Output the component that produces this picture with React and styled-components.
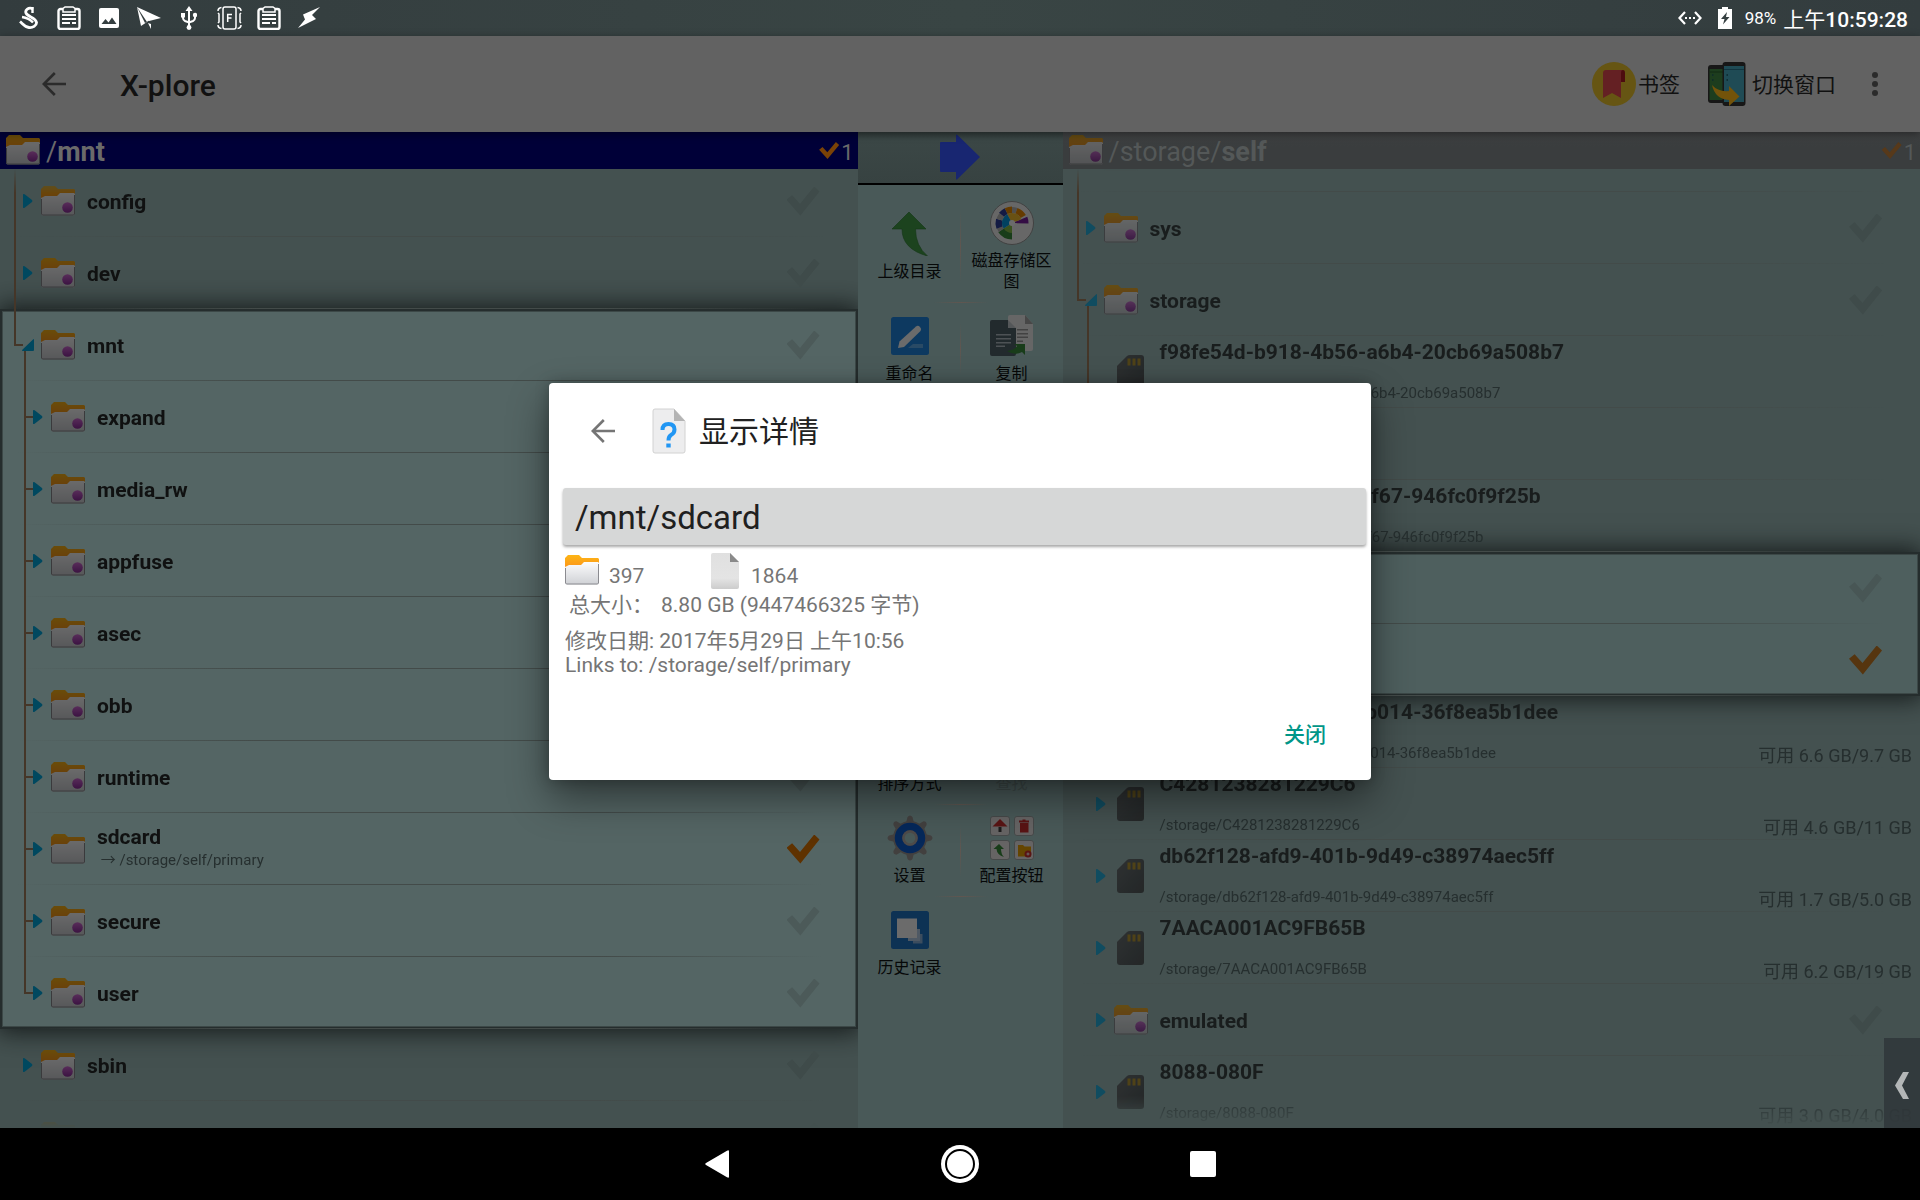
import React from "react";
import styled, { createGlobalStyle, css } from "styled-components";

const GlobalStyle = createGlobalStyle`
  *, *::before, *::after { box-sizing: border-box; }
  body {
    margin: 0;
    background: #000;
    font-family: Roboto, "Noto Sans CJK SC", sans-serif;
  }
  button {
    font: inherit;
    color: inherit;
    border: 0;
    padding: 0;
    background: none;
    cursor: pointer;
  }
  svg { display: block; flex: none; }
`;

const Screen = styled.div`
  position: relative;
  display: flex;
  flex-direction: column;
  height: 100vh;
  overflow: hidden;
`;

/* ---------- status bar ---------- */

const StatusBar = styled.header`
  flex: none;
  display: flex;
  align-items: center;
  justify-content: space-between;
  height: 36px;
  padding: 0 12px 0 17px;
  background: linear-gradient(90deg, #333c3e, #394544 50%, #333c3e);
  color: #fff;
`;

const StatusGroup = styled.div`
  display: flex;
  align-items: center;
  gap: 16px;
`;

const StatusIcon = styled.span`
  display: flex;
  justify-content: center;
  width: 24px;
`;

const Battery = styled.span`
  font-size: 17px;
  margin-left: -3px;
`;

const Clock = styled.time`
  font-size: 21px;
  font-weight: 500;
  margin-left: -9px;
`;

const ClockPeriod = styled.span`
  font-weight: 400;
`;

/* ---------- toolbar ---------- */

const Toolbar = styled.div`
  flex: none;
  position: relative;
  z-index: 1;
  display: flex;
  align-items: center;
  height: 96px;
  padding: 0 36px 0 42px;
  background: #626262;
  color: #111;
  box-shadow: 0 2px 8px rgba(0, 0, 0, 0.4);
`;

const AppTitle = styled.h1`
  flex: 1;
  margin: 0 0 0 54px;
  padding-top: 2px;
  font-size: 30px;
  font-weight: 500;
`;

const ToolbarButton = styled.button`
  display: flex;
  align-items: center;
  gap: ${(p) => p.$gap}px;
  margin-right: ${(p) => p.$after}px;
  font-size: 21px;
`;

const ToolbarLabel = styled.span`
  padding-bottom: 2px;
`;

/* ---------- panes ---------- */

const Workspace = styled.main`
  flex: 1;
  min-height: 0;
  display: grid;
  grid-template-columns: 1fr 205px 1fr;
`;

const Pane = styled.section`
  position: relative;
  display: flex;
  flex-direction: column;
  min-width: 0;
  min-height: 0;
  background: #445150;
  overflow: hidden;
`;

const PaneHeader = styled.div`
  flex: none;
  display: flex;
  align-items: center;
  height: 37px;
  padding: 0 4px 0 6px;
  background: ${(p) => (p.$active ? "#000038" : "linear-gradient(#3f4142, #3a3d3e 40%)")};
  color: ${(p) => (p.$active ? "#6a6a6a" : "#545858")};
  font-size: 27px;
`;

const PanePath = styled.h2`
  flex: 1;
  margin: 0 0 0 6px;
  padding-top: 4px;
  font-size: 27px;
  line-height: 33px;
  font-weight: 400;
`;

const Count = styled.span`
  margin-left: 2px;
  padding-top: 3px;
  font-size: 22px;
`;

const ListViewport = styled.div`
  flex: 1;
  min-height: 0;
  overflow: hidden;
  mask-image: linear-gradient(transparent, #000 24px, #000 calc(100% - 32px), transparent);
`;

const TreeList = styled.ul`
  list-style: none;
  margin: ${(p) => -p.$scrolled}px 0 0;
  padding: 0;
`;

const Group = styled.div`
  --unchecked: ${(p) => (p.$active ? "#4c5a59" : "#485655")};
  background: ${(p) => (p.$active ? "#546564" : "#4e5f5e")};
  box-shadow: inset 0 0 0 2px #252d2d, inset 0 0 0 3px #3c4847, 0 0 24px 3px rgba(16, 20, 20, 0.9);
`;

const lineColor = "#453628";

const Row = styled.li`
  position: relative;
  display: flex;
  align-items: center;
  height: 72px;
  padding: 0 8px 0 ${(p) => 22 + p.$level * 10}px;
  background: linear-gradient(90deg, transparent 2%, #434b49 30%, #434b49 70%, transparent 96%)
    bottom / 100% 1px no-repeat;
  color: ${(p) => (p.$active ? "#101111" : "#191d1d")};

  &::before {
    content: "";
    display: ${(p) => (p.$line ? "block" : "none")};
    position: absolute;
    left: ${(p) => (p.$level ? 24 : 14)}px;
    top: 0;
    height: ${(p) => (p.$line === "end" ? 37 : 72)}px;
    width: ${(p) => (p.$line === "through" ? 2 : 9)}px;
    border-left: 2px solid ${lineColor};
    border-bottom: ${(p) => (p.$line === "end" ? `2px solid ${lineColor}` : 0)};
  }

  &::after {
    content: "";
    display: ${(p) => (p.$open || p.$branch ? "block" : "none")};
    position: absolute;
    left: ${(p) => (p.$open ? 24 : 26)}px;
    top: ${(p) => (p.$open ? 40 : 35)}px;
    width: ${(p) => (p.$open ? 2 : 7)}px;
    height: ${(p) => (p.$open ? 32 : 2)}px;
    background: ${lineColor};
  }
`;

const Expander = styled.button`
  position: relative;
  z-index: 1;
  width: 12px;
  margin-right: 7px;
`;

const dimmed = css`
  filter: brightness(0.42);
  opacity: ${(p) => (p.$faded ? 0.85 : 1)};
`;

const IconSlot = styled.span`
  ${dimmed}
  flex: none;
  display: flex;
  justify-content: center;
  width: 34px;
`;

const RowText = styled.div`
  flex: 1;
  min-width: 0;
  height: 72px;
  display: flex;
  flex-direction: column;
  justify-content: ${(p) => (p.$spread ? "space-between" : "center")};
  padding: ${(p) => (p.$spread ? "4px 0 4px 12px" : p.$twoLines ? "3px 0 5px 12px" : "5px 0 3px 12px")};
  white-space: nowrap;
`;

const Name = styled.span`
  font-size: 21px;
  line-height: 24px;
  font-weight: 700;
`;

const Detail = styled.span`
  font-size: 15px;
  line-height: 22px;
  color: #262f2f;
  white-space: pre;
`;

const Free = styled.span`
  align-self: flex-end;
  margin-bottom: 2px;
  font-size: 18px;
  line-height: 20px;
  color: #262f2f;
`;

const CheckMark = styled.input`
  appearance: none;
  flex: none;
  width: ${(p) => (p.$small ? 20 : 33)}px;
  height: ${(p) => (p.$small ? 17 : 29)}px;
  margin: ${(p) => (p.$small ? "0" : "0 30px 0 0")};
  background: var(--unchecked, #3f4b4a);
  clip-path: polygon(0 46%, 17% 30%, 41% 60%, 84% 0, 100% 17%, 42% 100%);

  &:checked { background: ${(p) => (p.$faded ? "#56350f" : "#5f3200")}; }
  &:checked:disabled { background: ${(p) => (p.$faded ? "#57391a" : "#7a4206")}; }
`;

/* ---------- centre column ---------- */

const Middle = styled.nav`
  min-height: 0;
  background: #495958;
  overflow: hidden;
`;

const SwitchPane = styled.button`
  display: flex;
  justify-content: center;
  align-items: center;
  width: 100%;
  height: 53px;
  padding: 0 0 2px;
  background: linear-gradient(#323c3b, #3b4746 8px, #374241);
  border-bottom: 2px solid #000;
`;

const ToolGrid = styled.div`
  display: grid;
  grid-template-columns: 1fr 1fr;
  padding: 5px 0 0 1px;
`;

const Tool = styled.button`
  position: relative;
  display: flex;
  flex-direction: column;
  align-items: center;
  justify-content: center;
  gap: 5px;
  min-height: ${(p) => (p.$tall ? 113 : 92)}px;
  padding: 11px 10px;
  font-size: 16px;
  line-height: 21px;
  color: ${(p) => (p.disabled ? "#3f4b4a" : "#060808")};

  &:nth-child(odd)::before {
    content: "";
    position: absolute;
    right: 0;
    top: 20px;
    bottom: 20px;
    width: 1px;
    background: linear-gradient(transparent, #605650, transparent);
  }
  &:nth-child(odd)::after {
    content: "";
    position: absolute;
    z-index: 1;
    right: -27px;
    bottom: 0;
    width: 54px;
    height: 1px;
    background: linear-gradient(90deg, transparent, #605650, transparent);
  }
  &:last-child::before, &:last-child::after { display: none; }
`;

const ToolIcon = styled.span`
  ${dimmed}
  display: flex;
  align-items: center;
  justify-content: center;
  width: 46px;
  height: 44px;
`;

const EdgeTab = styled.button`
  position: absolute;
  right: 0;
  bottom: 0;
  display: flex;
  align-items: center;
  justify-content: center;
  width: 36px;
  height: 90px;
  padding: 4px 0 0 0;
  background: rgba(46, 52, 56, 0.8);
`;

/* ---------- dialog ---------- */

const DialogLayer = styled.div`
  position: absolute;
  inset: 36px 0 72px;
  z-index: 2;
  display: flex;
  align-items: center;
  justify-content: center;
  padding-bottom: 2px;
`;

const Dialog = styled.div`
  display: flex;
  flex-direction: column;
  width: 822px;
  max-width: 90%;
  min-height: 397px;
  background: #fff;
  color: #757575;
  border-radius: 4px;
  box-shadow: 0 18px 40px rgba(0, 0, 0, 0.45), 0 0 14px rgba(0, 0, 0, 0.25);
`;

const DialogHeader = styled.div`
  display: flex;
  align-items: center;
  height: 96px;
  padding: 0 42px;
`;

const DialogTitle = styled.h2`
  margin: 0 0 0 13px;
  padding-bottom: 4px;
  font-size: 30px;
  font-weight: 400;
  color: #212121;
`;

const FileBadge = styled.span`
  margin-left: 37px;
`;

const PathButton = styled.button`
  margin: 9px 5px 0 14px;
  padding: 2px 12px 0;
  height: 57px;
  font-size: 33px;
  text-align: left;
  color: #1f2020;
  background: #d6d7d7;
  border-radius: 3px;
  box-shadow: 0 2px 3px rgba(0, 0, 0, 0.35);
`;

const Details = styled.div`
  flex: 1;
  padding: 8px 16px 0;
  font-size: 21px;
  line-height: 24px;
`;

const Counts = styled.div`
  display: flex;
  height: 40px;
  align-items: flex-start;
`;

const Tally = styled.span`
  display: flex;
  align-items: center;
  gap: ${(p) => p.$gap}px;
  width: 146px;
  height: 36px;
`;

const TallyValue = styled.span`
  padding-top: 11px;
`;

const SizeLine = styled.p`
  display: flex;
  gap: 8px;
  margin: 0 0 12px 4px;
`;

const SizeLabel = styled.span`
  width: 84px;
`;

const Line = styled.p`
  margin: 0;
`;

const DialogActions = styled.div`
  display: flex;
  justify-content: flex-end;
  padding: 0 45px 30px;
`;

const CloseButton = styled.button`
  font-size: 21px;
  line-height: 30px;
  font-weight: 500;
  color: #009688;
`;

/* ---------- navigation bar ---------- */

const NavBar = styled.footer`
  flex: none;
  display: flex;
  align-items: center;
  justify-content: center;
  gap: 203px;
  height: 72px;
  background: #000;
`;

const NavButton = styled.button`
  display: flex;
  align-items: center;
  justify-content: center;
  width: 40px;
  height: 40px;
`;

/* ---------- drawings ---------- */

const BackArrow = ({ color }) => (
  <svg width="24" height="24" viewBox="0 0 24 24" fill="none" stroke={color} strokeWidth="2.6">
    <path d="M24 12H2M12.800 1 1.800 12l11 11" />
  </svg>
);

const Folder = ({ dot }) => (
  <svg width="34" height="33" viewBox="0 0 34 33">
    <defs>
      <linearGradient id="tab" x1="0" y1="0" x2="0" y2="1">
        <stop offset="0" stopColor="#fdb515" />
        <stop offset="1" stopColor="#fb8a1c" />
      </linearGradient>
      <linearGradient id="front" x1="0" y1="0" x2="0" y2="1">
        <stop offset="0" stopColor="#fcfcfd" />
        <stop offset="1" stopColor="#cfd1d5" />
      </linearGradient>
      <linearGradient id="dot" x1="0" y1="0" x2="0" y2="1">
        <stop offset="0" stopColor="#d46ad6" />
        <stop offset="1" stopColor="#8c2d9c" />
      </linearGradient>
    </defs>
    <path d="M0 18V4l3-3h11l3 3h16l1 1v13z" fill="url(#tab)" />
    <path d="M1 12.500 4 11h12l3-3h14l1 1v20l-1 1.500H1L0 29V13z" fill="url(#front)" />
    <path d="M.5 14v15l1 1h31l1-1V10" fill="none" stroke="#8b8b90" strokeWidth="1" />
    {dot && <circle cx="26.500" cy="22.500" r="5.300" fill="url(#dot)" />}
  </svg>
);

const SdCard = () => (
  <svg width="27" height="34" viewBox="0 0 27 34">
    <defs>
      <linearGradient id="sd" x1="0" y1="0" x2="1" y2="1">
        <stop offset="0" stopColor="#666a6d" />
        <stop offset=".55" stopColor="#55585a" />
        <stop offset="1" stopColor="#4a4d4f" />
      </linearGradient>
    </defs>
    <path d="M0 11 10 1q1-1 3-1h11q3 0 3 3v28q0 3-3 3H3q-3 0-3-3z" fill="url(#sd)" />
    <path d="M10.500 3.500h3v7h-3zM15.500 3.500h3v7h-3zM20.500 3.500h3v7h-3z" fill="#c4981f" />
  </svg>
);

const ExpandArrow = ({ open, faded }) => (
  <svg width="12" height="16" viewBox="0 0 12 16" fill={faded ? "#104c60" : "#00485f"}>
    {open ? (
      <path d="M11 2.500q1-1 1 .5v10q0 1-1 1H.6q-1.200-.5 0-1.500z" />
    ) : (
      <path d="M1 1.500q.3-1 1.600-.3L10 7q.9 1 0 2l-7.400 5.800q-1.300.7-1.600-.3z" />
    )}
  </svg>
);

const StorageDisc = () => {
  const wedge = (a, b, r, fill, r0 = 0) => {
    const pt = (t, q) => {
      const rad = ((t - 90) * Math.PI) / 180;
      return `${22 + q * Math.cos(rad)} ${22 + q * Math.sin(rad)}`;
    };
    return (
      <path
        key={`${a}-${r}`}
        fill={fill}
        d={`M${pt(a, r0)}L${pt(a, r)}A${r} ${r} 0 0 1 ${pt(b, r)}L${pt(b, r0)}A${r0} ${r0} 0 0 0 ${pt(a, r0)}z`}
      />
    );
  };
  return (
    <svg width="44" height="44" viewBox="0 0 44 44">
      <circle cx="22" cy="22" r="21.500" fill="#f6f6f6" stroke="#9a9a9a" />
      {wedge(0, 20, 16, "#b9b9b9", 10)}
      {wedge(20, 60, 16, "#f08c00", 10)}
      {wedge(68, 92, 16.500, "#7b1fa2", 3)}
      {wedge(180, 236, 16.500, "#388e3c", 9)}
      {wedge(236, 250, 16, "#b9b9b9", 10)}
      {wedge(250, 285, 16.500, "#303f9f", 10)}
      {wedge(285, 308, 16, "#b9b9b9", 10)}
      {wedge(308, 334, 16.500, "#303f9f", 10)}
      {wedge(334, 360, 16.500, "#f08c00", 10)}
      {wedge(-28, 68, 10, "#fbc02d")}
      {wedge(180, 236, 10, "#8bc34a")}
      {wedge(236, 332, 10, "#039be5")}
      <circle cx="22" cy="22" r="3" fill="#fff" />
    </svg>
  );
};

const UpArrow = () => (
  <svg width="44" height="44" viewBox="0 0 44 44">
    <path d="M21 0 38 17H27.500q0 17 12 27Q14 37 14 17H4z" fill="#43a047" stroke="#2e7d32" strokeWidth=".6" />
  </svg>
);

const Rename = () => (
  <svg width="38" height="38" viewBox="0 0 38 38">
    <rect width="38" height="38" rx="2.500" fill="#1e88e5" />
    <path d="M17 31 22 27h10v4z" fill="#90caf9" opacity=".6" />
    <path d="m7 31 1.500-6.500L25 9.500q2-1.500 4 .5t.5 4L13 30z" fill="#fff" />
  </svg>
);

const Copy = () => (
  <svg width="44" height="42" viewBox="0 0 44 42">
    <path d="M18 2q0-2 2-2h15l8 9v25q0 2-2 2H18z" fill="#f2f2f2" />
    <path d="M35 0v9h8z" fill="#a8a8a8" />
    <path d="M27 14h11v1.500H27zm0 4h11v1.500H27zm0 3.500h11V23H27zm0 4h6V27h-6z" fill="#9e9e9e" />
    <path d="M0 7q0-2 2-2h16v8h8v26q0 2-2 2H2q-2 0-2-2z" fill="#52636c" />
    <path d="m18 5 8 8h-8z" fill="#c9d0d4" />
    <path d="M6 19h15v1.500H6zm0 4h15v1.500H6zm0 4h15v1.500H6zm0 3.500h9V32H6z" fill="#b8c4ca" />
    <path d="M17 36q8-1 10-5l-3-2h11v11l-3-3q-7 4-15-1z" fill="#388e3c" />
  </svg>
);

const Gear = () => (
  <svg width="46" height="46" viewBox="0 0 46 46">
    <g fill="#9e9896">
      {[0, 45, 90, 135].map((a) => (
        <path key={a} transform={`rotate(${a} 23 23)`} d="M20.500 2q2.500-3 5 0l2 8v26l-2 8q-2.500 3-5 0l-2-8V10z" />
      ))}
      <circle cx="23" cy="23" r="17" />
    </g>
    <circle cx="23" cy="23" r="11.500" fill="none" stroke="#0d5fd6" strokeWidth="7.500" />
    <circle cx="23" cy="23" r="6.500" fill="#aed4d2" stroke="#b9b2b0" strokeWidth="2.500" />
  </svg>
);

const ButtonSet = () => (
  <svg width="44" height="44" viewBox="0 0 44 44">
    <g fill="#f3eeee" stroke="#8d8d8d" strokeWidth=".6">
      <rect x=".5" y=".5" width="19" height="19" rx="2.500" />
      <rect x="24.500" y=".5" width="19" height="19" rx="2.500" />
      <rect x=".5" y="24.500" width="19" height="19" rx="2.500" />
      <rect x="24.500" y="24.500" width="19" height="19" rx="2.500" />
    </g>
    <path d="m10 3 7.500 7.500h-15z" fill="#d32f2f" />
    <path d="M8.500 11h3v5h-3z" fill="#444" />
    <path d="M29 4.500h10v2H29zM30 7h8.500v9.500H30zM32.500 3.500h3v1h-3z" fill="#d32f2f" />
    <path d="m9 28 5 5h-3q0 5 3 8-7-2-7.500-8h-3z" fill="#388e3c" />
    <path d="M28 29h5l1.500 1.500H41v10H28z" fill="#f0a500" />
    <circle cx="38" cy="38" r="3.500" fill="#d32f2f" />
    <path d="M36.500 38h3M38 36.500v3" stroke="#fff" />
  </svg>
);

const History = () => (
  <svg width="38" height="38" viewBox="0 0 38 38">
    <rect width="38" height="38" rx="2.500" fill="#1e77c8" />
    <path d="M22 23h9.500v9.500H22z" fill="#8fb8e0" />
    <path d="M17 18h12v12H17z" fill="#bcd5ee" />
    <path d="M6 7.500h20v19.500H6z" fill="#fff" />
  </svg>
);

const Bookmark = () => (
  <svg width="44" height="44" viewBox="0 0 44 44">
    <circle cx="22" cy="22" r="22" fill="#665513" />
    <path d="M11 11q0-3 3-3h17l-2 3v25l-9-5-9 5z" fill="#642023" />
    <path d="M29 11q0-3 2-3t2 3v9h-4z" fill="#4d0b0f" />
  </svg>
);

const Phones = () => (
  <svg width="38" height="44" viewBox="0 0 38 44">
    <rect x="0" y="3" width="20" height="38" rx="3" fill="#171717" />
    <rect x="1.500" y="7" width="17" height="31" fill="#1d3d1e" />
    <path d="M2 10h14" stroke="#122b13" />
    <rect x="14.500" y="0" width="23" height="44" rx="3" fill="#171717" />
    <rect x="16" y="4" width="20" height="36" fill="#1f4b55" />
    <path d="M16 7.500h20" stroke="#123540" />
    <path d="M4 13h1.500m-1.500 5h1.500M18.500 13H20m-1.500 5H20" stroke="#0d282c" strokeWidth="1.500" />
    <path d="M4 23q6 7 17 6v-5l10.500 10.500L21 44v-6Q7 37 4 23z" fill="#73530a" />
  </svg>
);

const Clipboard = () => (
  <svg width="24" height="24" viewBox="0 0 24 24">
    <rect x="1.500" y="3" width="21" height="20" rx="2" fill="none" stroke="#fff" strokeWidth="2.400" />
    <path d="M6 2.500 8 1h8l2 1.500V6H6z" fill="#353f41" stroke="#fff" strokeWidth="1.500" />
    <path d="M5 9h14M5 13h14M5 17h8m2 0h4" stroke="#fff" strokeWidth="2" />
  </svg>
);

const ScriptS = () => (
  <svg width="24" height="24" viewBox="0 0 24 24" fill="none" stroke="#fff">
    <path d="M16 3c-4-2.500-9 1-6.500 5C12 11 19 12 19.500 16.500c.3 3-4 5.500-7.500 5-4-.5-6-3.500-9-6" strokeWidth="2.800" />
    <path d="M15.500 1v6M5 11q7 1 11 5.500" strokeWidth="2.400" />
  </svg>
);

const Picture = () => (
  <svg width="20" height="20" viewBox="0 0 20 20">
    <rect width="20" height="20" rx="2" fill="#fff" />
    <path d="m2.500 16 4-5 3 3.500 3.500-5 4.500 6.500z" fill="#353f41" />
  </svg>
);

const PaperPlane = () => (
  <svg width="24" height="24" viewBox="0 0 24 24" fill="#fff">
    <path d="M0 1 24 12 12 15zM0 1l4 19 6-4zM0 1l13 13-5 3zM11 17l3 6v-5z" />
  </svg>
);

const Usb = () => (
  <svg width="16" height="24" viewBox="0 0 16 24" fill="#fff">
    <path d="m8 0 3.500 5h-7zM0 7h4v4.500H0z" />
    <circle cx="14" cy="9" r="2.200" />
    <circle cx="8" cy="21.500" r="2.400" />
    <path d="M8 3v18M2 10v2q0 2 2 3l4 1.500 4-1.500q2-1 2-3v-2" fill="none" stroke="#fff" strokeWidth="2" />
  </svg>
);

const Frame = () => (
  <svg width="25" height="24" viewBox="0 0 25 24" fill="none" stroke="#fff" strokeWidth="1.500">
    <rect x="6" y="1" width="13" height="22" rx="2" />
    <path d="M4.500 1.500Q1 2 1 5m0 2 1 1v8l-1 1m0 2q0 3 3.500 3.500M20.500 1.500Q24 2 24 5m0 2-1 1v8l1 1m0 2q0 3-3.500 3.500" />
    <path d="M10.700 16V8.500h4.300m-4 3.500h3.500" />
  </svg>
);

const Bolt = () => (
  <svg width="24" height="22" viewBox="0 0 24 22" fill="#fff">
    <path d="M23 0 6 7.500l2 5L1 21l18-9-4-4z" />
  </svg>
);

const QuestionFile = () => (
  <svg width="34" height="46" viewBox="0 0 34 46">
    <path d="M1 3q0-2 2-2h19l11 12v30q0 2-2 2H3q-2 0-2-2z" fill="#ededee" stroke="#d2d2d2" />
    <path d="M22 1v12h11z" fill="#b4b4b4" />
    <path d="M10.500 22q0-6 6-6t6 5.500q0 3.500-3.500 5.500-2.500 1.500-2.500 5.500" fill="none" stroke="#2196f3" strokeWidth="4" />
    <path d="M14.300 35.500h4.400v4h-4.400z" fill="#2196f3" />
  </svg>
);

const PlainFile = () => (
  <svg width="28" height="36" viewBox="0 0 28 36">
    <defs>
      <linearGradient id="sheet" x1="0" y1="0" x2="0" y2="1">
        <stop offset="0" stopColor="#e0e0e0" />
        <stop offset=".7" stopColor="#e4e4e4" />
        <stop offset="1" stopColor="#cccccc" />
      </linearGradient>
    </defs>
    <path d="M0 2q0-2 2-2h17l9 9v25q0 2-2 2H2q-2 0-2-2z" fill="url(#sheet)" />
    <path d="M19 0v9h9z" fill="#8a8a8a" />
  </svg>
);

/* ---------- data ---------- */

const leftBefore = [
  { name: "config", icon: "system", line: "through" },
  { name: "dev", icon: "system", line: "through" },
];
const leftOpen = [
  { name: "mnt", icon: "system", line: "end", open: true },
  ...["expand", "media_rw", "appfuse", "asec", "obb", "runtime"].map((name) => ({
    name, icon: "system", level: 1, line: "through", branch: true,
  })),
  { name: "sdcard", icon: "folder", level: 1, line: "through", branch: true, detail: " → /storage/self/primary", checked: true },
  { name: "secure", icon: "system", level: 1, line: "through", branch: true },
  { name: "user", icon: "system", level: 1, line: "end" },
];
const leftAfter = [
  { name: "sbin", icon: "system" },
  { icon: "system" },
];

const card = (name, free, extra) => ({
  name, free, icon: "card", level: 1, detail: name && `/storage/${name}`, spread: true, ...extra,
});

const rightBefore = [
  { icon: "system", line: "through" },
  { name: "sys", icon: "system", line: "through" },
  { name: "storage", icon: "system", line: "end", open: true },
  card("f98fe54d-b918-4b56-a6b4-20cb69a508b7", "", { line: "through", leaf: true }),
  card("", "", { line: "through" }),
  card("1c7f3ab2-5e1d-4cff-9f67-946fc0f9f25b", "", { line: "through" }),
];
const rightOpen = [
  { name: "self", icon: "system", level: 1, line: "end" },
  { name: "primary", icon: "folder", level: 1, checked: true },
];
const rightAfter = [
  card("5a0c9f3e-72b8-46f0-b014-36f8ea5b1dee", "6.6 GB/9.7 GB"),
  card("C4281238281229C6", "4.6 GB/11 GB"),
  card("db62f128-afd9-401b-9d49-c38974aec5ff", "1.7 GB/5.0 GB"),
  card("7AACA001AC9FB65B", "6.2 GB/19 GB"),
  { name: "emulated", icon: "system", level: 1 },
  card("8088-080F", "3.0 GB/4.0 GB"),
];

const tools = [
  { label: "上级目录", icon: <UpArrow />, tall: true },
  { label: "磁盘存储区图", icon: <StorageDisc />, tall: true },
  { label: "重命名", icon: <Rename /> },
  { label: "复制", icon: <Copy /> },
  { tall: true }, { tall: true },
  {}, {},
  { tall: true }, { tall: true },
  { label: "排序方式" },
  { label: "查找", disabled: true },
  { label: "设置", icon: <Gear /> },
  { label: "配置按钮", icon: <ButtonSet /> },
  { label: "历史记录", icon: <History /> },
];

/* ---------- assembled parts ---------- */

const Entry = ({ item, active }) => {
  const { name, icon, level = 0, line, open, branch, leaf, detail, spread, free, checked } = item;
  return (
    <Row $level={level} $line={line} $open={open} $branch={branch} $active={active}>
      <Expander aria-label={name} disabled={leaf}>
        {!leaf && <ExpandArrow open={open} faded={!active} />}
      </Expander>
      <IconSlot $faded={!active}>
        {icon === "card" ? <SdCard /> : <Folder dot={icon === "system"} />}
      </IconSlot>
      <RowText $spread={spread} $twoLines={Boolean(detail)}>
        <Name>{name}</Name>
        {detail && <Detail>{detail}</Detail>}
      </RowText>
      {free && <Free>可用 {free}</Free>}
      {icon !== "card" && (
        <CheckMark type="checkbox" aria-label={name} defaultChecked={checked} $faded={!active} />
      )}
    </Row>
  );
};

const FilePane = ({ active, path, current, scrolled, before, opened, after, children }) => {
  const rows = (items) => items.map((item, i) => <Entry key={i} item={item} active={active} />);
  return (
    <Pane>
      <PaneHeader $active={active}>
        <IconSlot $faded={!active}><Folder dot /></IconSlot>
        <PanePath>{path}<b>{current}</b></PanePath>
        <CheckMark type="checkbox" aria-label={current} defaultChecked disabled $small $faded={!active} />
        <Count>1</Count>
      </PaneHeader>
      <ListViewport>
        <TreeList $scrolled={scrolled}>
          {rows(before)}
          <Group $active={active}>{rows(opened)}</Group>
          {rows(after)}
        </TreeList>
      </ListViewport>
      {children}
    </Pane>
  );
};

export default function App() {
  return (
    <Screen>
      <GlobalStyle />
      <StatusBar>
        <StatusGroup>
          {[ScriptS, Clipboard, Picture, PaperPlane, Usb, Frame, Clipboard, Bolt].map((Icon, i) => (
            <StatusIcon key={i}><Icon /></StatusIcon>
          ))}
        </StatusGroup>
        <StatusGroup>
          <svg width="24" height="14" viewBox="0 0 24 14" fill="none" stroke="#fff" strokeWidth="2.200">
            <path d="M7 1 1.500 7 7 13M17 1l5.500 6L17 13" />
            <path d="M7 7h2m2 0h2m2 0h2" strokeWidth="2" />
          </svg>
          <svg width="14" height="22" viewBox="0 0 14 22">
            <path d="M0 2h4V0h6v2h4v20H0z" fill="#fff" />
            <path d="M9 5 3 12h3.500L5 17.500 11.500 10H8z" fill="#353f41" />
          </svg>
          <Battery>98%</Battery>
          <Clock><ClockPeriod>上午</ClockPeriod>10:59:28</Clock>
        </StatusGroup>
      </StatusBar>

      <Toolbar>
        <button aria-label="返回"><BackArrow color="#2b2b2b" /></button>
        <AppTitle>X-plore</AppTitle>
        <ToolbarButton $gap={2} $after={28}><Bookmark /><ToolbarLabel>书签</ToolbarLabel></ToolbarButton>
        <ToolbarButton $gap={6} $after={30}><Phones /><ToolbarLabel>切换窗口</ToolbarLabel></ToolbarButton>
        <button aria-label="更多">
          <svg width="18" height="24" viewBox="0 0 18 24" fill="#2b2b2b">
            <circle cx="9" cy="3" r="3" /><circle cx="9" cy="12" r="3" /><circle cx="9" cy="21" r="3" />
          </svg>
        </button>
      </Toolbar>

      <Workspace>
        <FilePane active path="/" current="mnt" scrolled={4} before={leftBefore} opened={leftOpen} after={leftAfter} />

        <Middle>
          <SwitchPane aria-label="切换窗口">
            <svg width="40" height="46" viewBox="0 0 40 46">
              <path d="M0 9q0-1 1-1h15V1q0-1 1.500 0L40 23 17.500 45q-1.500 1-1.500 0v-7H1q-1 0-1-1z" fill="#182671" />
            </svg>
          </SwitchPane>
          <ToolGrid>
            {tools.map((tool, i) => (
              <Tool key={i} $tall={tool.tall} disabled={tool.disabled}>
                <ToolIcon>{tool.icon}</ToolIcon>
                <span>{tool.label}</span>
              </Tool>
            ))}
          </ToolGrid>
        </Middle>

        <FilePane path="/storage/" current="self" scrolled={49} before={rightBefore} opened={rightOpen} after={rightAfter}>
          <EdgeTab aria-label="展开">
            <svg width="14" height="27" viewBox="0 0 14 27">
              <path d="M8 0h6L7 13.500 14 27H8L0 13.500z" fill="#b3b6b7" />
            </svg>
          </EdgeTab>
        </FilePane>
      </Workspace>

      <NavBar>
        <NavButton aria-label="返回">
          <svg width="24" height="28" viewBox="0 0 24 28" fill="#fff">
            <path d="M22 .8q2-1.200 2 .8v24.800q0 2-2 .8L1 15q-1.500-1 0-2z" />
          </svg>
        </NavButton>
        <NavButton aria-label="主屏幕">
          <svg width="38" height="38" viewBox="0 0 38 38">
            <circle cx="19" cy="19" r="19" fill="#fff" />
            <circle cx="19" cy="19" r="14" fill="#fff" stroke="#000" strokeWidth="2" />
          </svg>
        </NavButton>
        <NavButton aria-label="最近任务">
          <svg width="26" height="26" viewBox="0 0 26 26"><rect width="26" height="26" rx="2" fill="#fff" /></svg>
        </NavButton>
      </NavBar>

      <DialogLayer>
        <Dialog role="dialog" aria-labelledby="details-title">
          <DialogHeader>
            <button aria-label="返回"><BackArrow color="#757575" /></button>
            <FileBadge><QuestionFile /></FileBadge>
            <DialogTitle id="details-title">显示详情</DialogTitle>
          </DialogHeader>
          <PathButton>/mnt/sdcard</PathButton>
          <Details>
            <Counts>
              <Tally $gap={10}><Folder /><TallyValue>397</TallyValue></Tally>
              <Tally $gap={12}><PlainFile /><TallyValue>1864</TallyValue></Tally>
            </Counts>
            <SizeLine><SizeLabel>总大小：</SizeLabel>8.80 GB (9447466325 字节)</SizeLine>
            <Line>修改日期: 2017年5月29日 上午10:56</Line>
            <Line>Links to: /storage/self/primary</Line>
          </Details>
          <DialogActions>
            <CloseButton>关闭</CloseButton>
          </DialogActions>
        </Dialog>
      </DialogLayer>
    </Screen>
  );
}
